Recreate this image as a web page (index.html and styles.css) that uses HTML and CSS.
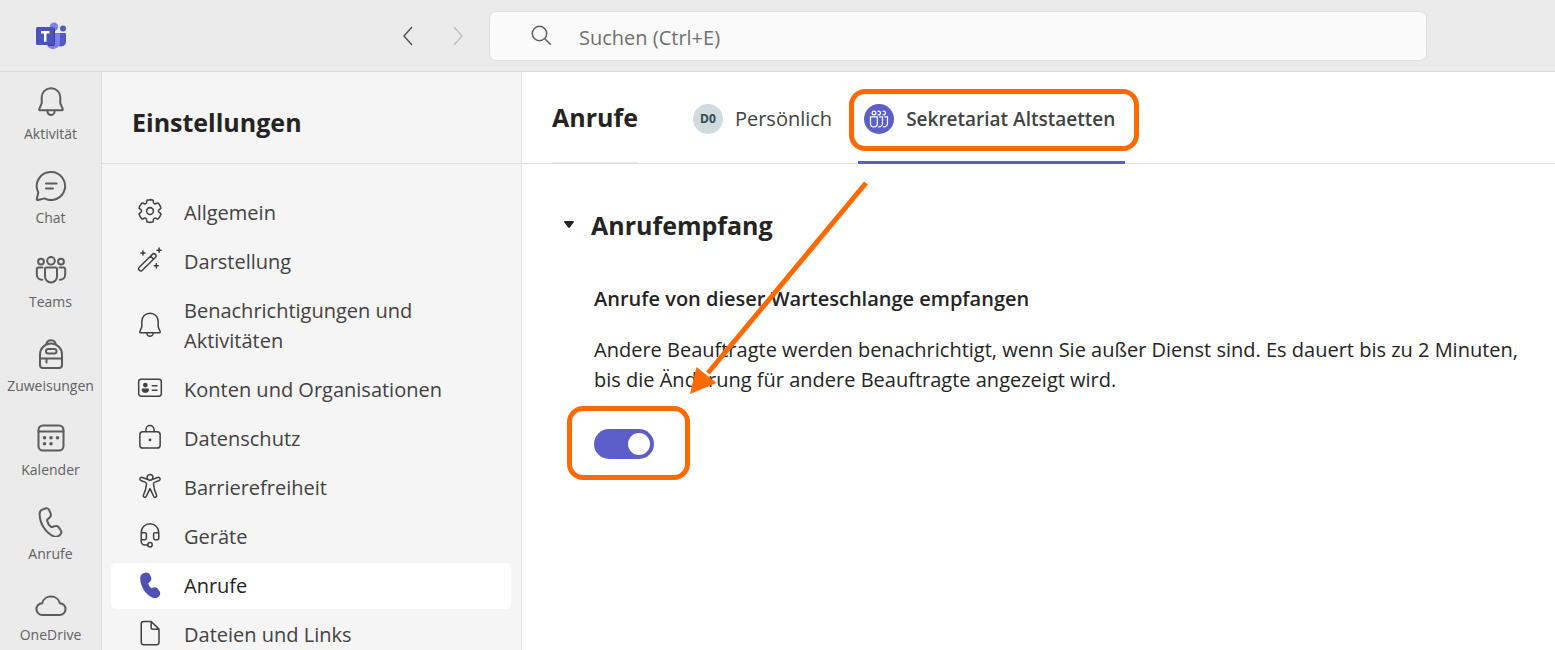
FILE: index.html
```html
<!DOCTYPE html>
<html lang="de">
<head>
  <meta charset="utf-8">
  <title>Einstellungen - Anrufe</title>
  <meta name="viewport" content="width=device-width, initial-scale=1">
  <link rel="stylesheet" href="styles.css">
</head>
<body>
  <header class="topbar">
    <div class="logo">
      <svg width="32" height="32" viewBox="0 0 32 32" aria-hidden="true">
        <circle cx="28" cy="8.500" r="3" fill="#5059c9"/>
        <path d="M22 13h8a1 1 0 0 1 1 1v7.500a5 5 0 0 1-9 3z" fill="#5059c9"/>
        <circle cx="19" cy="6.700" r="4.200" fill="#7b83eb"/>
        <path d="M13 13h11a1 1 0 0 1 1 1v8.500a7 7 0 0 1-13 3z" fill="#7b83eb"/>
        <path d="M13 8h6a1 1 0 0 1 1 1v15a2 2 0 0 1-2 2h-5z" fill="#3b3f86"/>
        <rect x="1" y="7" width="18" height="18" rx="1.500" fill="#4b53bc"/>
        <path d="M6 12.200h8.400M10.200 12.200v9.600" stroke="#fff" stroke-width="2.500" fill="none"/>
      </svg>
    </div>
    <div class="history">
      <button type="button" class="history-btn" aria-label="Zurück">
        <svg width="20" height="20" viewBox="0 0 20 20"><path d="M14 1L6 10l8 9"/></svg>
      </button>
      <button type="button" class="history-btn" aria-label="Vorwärts" disabled>
        <svg width="20" height="20" viewBox="0 0 20 20"><path d="M6 1l8 9-8 9"/></svg>
      </button>
    </div>
    <label class="search">
      <svg width="22" height="22" viewBox="0 0 22 22" aria-hidden="true"><circle cx="8.500" cy="8.500" r="7.200"/><path d="M13.800 13.800l6 6"/></svg>
      <input type="search" placeholder="Suchen (Ctrl+E)" aria-label="Suchen">
    </label>
  </header>

  <div class="app">
    <nav class="rail" aria-label="Apps">
      <a href="#" class="rail-item">
        <svg width="32" height="32" viewBox="0 0 32 32"><path d="M16 3.300c-5.200 0-9.300 3.900-9.300 8.900v6.200l-2.400 5.500c-.3.700.1 1.400.9 1.400h21.600c.8 0 1.200-.7.900-1.400l-2.400-5.500v-6.200c0-5-4.100-8.900-9.300-8.900z"/><path d="M12.300 25.800a3.700 4.200 0 0 0 7.400 0"/></svg>
        <span>Aktivität</span>
      </a>
      <a href="#" class="rail-item">
        <svg width="32" height="32" viewBox="0 0 32 32"><path d="M16 3a14 14 0 1 1-6.400 26.400L3 31c-.8.200-1.400-.5-1.200-1.200l1.500-6.400A14 14 0 0 1 16 3z"/><path d="M11 14.500h10.500M11 19.500h7"/></svg>
        <span>Chat</span>
      </a>
      <a href="#" class="rail-item">
        <svg width="32" height="32" viewBox="0 0 32 32"><circle cx="16" cy="7.800" r="3.800"/><circle cx="6" cy="8.600" r="2.900"/><circle cx="26" cy="8.600" r="2.900"/><path d="M11.500 14.600h9a1.500 1.500 0 0 1 1.500 1.500v7.400a6 6 0 0 1-12 0v-7.400a1.500 1.500 0 0 1 1.500-1.500z"/><path d="M7.500 14.600H3.300A1.500 1.500 0 0 0 1.800 16v5.500c0 3 2.200 5.200 5.400 5.200M24.500 14.600h4.200a1.500 1.500 0 0 1 1.500 1.500v5.400c0 3-2.200 5.200-5.400 5.200"/></svg>
        <span>Teams</span>
      </a>
      <a href="#" class="rail-item">
        <svg width="32" height="32" viewBox="0 0 32 32"><path d="M5 17.500a11 11 0 0 1 22 0V28a3 3 0 0 1-3 3H8a3 3 0 0 1-3-3z"/><path d="M5 21.500h22M11.500 21.500v4M11.300 7a4.800 4.800 0 0 1 9.400 0"/><rect x="11" y="12" width="10.500" height="4.400" rx="2.200"/></svg>
        <span>Zuweisungen</span>
      </a>
      <a href="#" class="rail-item">
        <svg width="32" height="32" viewBox="0 0 32 32"><rect x="3.500" y="4.500" width="25" height="25" rx="4.500"/><path d="M3.500 10.500h25"/><g class="dots"><circle cx="9.500" cy="16.800" r="1.800"/><circle cx="16" cy="16.800" r="1.800"/><circle cx="22.500" cy="16.800" r="1.800"/><circle cx="9.500" cy="22.800" r="1.800"/><circle cx="16" cy="22.800" r="1.800"/></g></svg>
        <span>Kalender</span>
      </a>
      <a href="#" class="rail-item">
        <svg width="32" height="32" viewBox="0 0 32 32"><path d="M7.200 4.600l3-1.100c1.600-.5 3.300.2 4 1.700l1.400 3.200c.6 1.400.2 3-.9 4l-2.100 1.900c-.4.400-.5.900-.4 1.400.5 2.400 1.900 4.600 3.700 6.100.4.300.9.400 1.400.2l2.700-.9c1.400-.4 3 .1 3.800 1.300l1.900 2.800c.9 1.300.8 3.100-.3 4.200l-.8.800c-1.400 1.400-3.500 2-5.400 1.400C10.300 27.900 5 18.500 4.600 9.600c-.1-2.200.9-4.300 2.600-5z"/></svg>
        <span>Anrufe</span>
      </a>
      <a href="#" class="rail-item">
        <svg width="32" height="29" viewBox="0 0 32 29"><path d="M7.500 26a5.900 5.900 0 0 1-.3-11.800C8 10.300 11.500 7.600 16 7.600s8 2.700 8.800 6.600a5.900 5.900 0 0 1-.3 11.800z"/></svg>
        <span>OneDrive</span>
      </a>
    </nav>

    <aside class="settings">
      <h1 class="settings-title">Einstellungen</h1>
      <nav class="settings-nav" aria-label="Einstellungen">
        <a href="#" class="settings-item">
          <svg width="28" height="28" viewBox="0 0 24 24"><path d="M12 2.250c.75 0 1.480.1 2.190.25.310.070.550.330.590.650l.17 1.530c.08.700.67 1.230 1.370 1.230.19 0 .38-.04.550-.12l1.400-.61c.29-.13.630-.06.850.17a9.800 9.800 0 0 1 2.200 3.800c.1.300 0 .630-.26.820l-1.250.92a1.380 1.380 0 0 0 0 2.220l1.250.92c.26.190.370.520.27.820a9.800 9.800 0 0 1-2.200 3.800c-.22.230-.56.300-.85.170l-1.410-.62a1.380 1.380 0 0 0-1.930 1.120l-.17 1.520c-.03.320-.26.580-.57.650a9.500 9.500 0 0 1-4.400 0 .75.750 0 0 1-.57-.65l-.17-1.520a1.380 1.380 0 0 0-1.930-1.110l-1.400.62c-.29.130-.63.060-.85-.17a9.800 9.800 0 0 1-2.200-3.800c-.1-.31.010-.64.270-.83l1.240-.91a1.380 1.380 0 0 0 0-2.230l-1.240-.91a.75.750 0 0 1-.27-.83 9.800 9.800 0 0 1 2.200-3.790c.22-.23.560-.3.850-.17l1.400.61a1.380 1.380 0 0 0 1.930-1.110l.17-1.530c.04-.32.270-.58.580-.65.720-.16 1.450-.24 2.190-.25z"/><circle cx="12" cy="12" r="2.900"/></svg>
          <span>Allgemein</span>
        </a>
        <a href="#" class="settings-item">
          <svg width="28" height="28" viewBox="0 0 24 24"><path d="M2.800 18.200L14 7.200a1.800 1.800 0 0 1 2.600 2.600l-11.200 11a1.800 1.800 0 0 1-2.600-2.600zM12.500 8.700l2.600 2.600M6 4.200v3.600M4.200 6h3.600M19.800 1.800v3.600M18 3.600h3.600M17.400 15.200v3.600M15.600 17h3.600"/></svg>
          <span>Darstellung</span>
        </a>
        <a href="#" class="settings-item">
          <svg width="28" height="28" viewBox="0 0 24 24"><path d="M12 2.700c-3.900 0-7 3-7 6.900v4.800l-1.700 4c-.2.500.1 1 .6 1h16.200c.5 0 .8-.5.6-1l-1.700-4V9.600c0-3.900-3.100-6.900-7-6.900zM9.200 19.600a2.800 3 0 0 0 5.600 0"/></svg>
          <span>Benachrichtigungen und Aktivitäten</span>
        </a>
        <a href="#" class="settings-item">
          <svg width="28" height="28" viewBox="0 0 24 24"><rect x="2.300" y="4.500" width="19.400" height="14.500" rx="2"/><path d="M14 10h4M14 14h4"/><g class="solid"><circle cx="8" cy="9.500" r="2"/><path d="M4.900 13.400c0-.6.400-.9.900-.9h4.400c.5 0 .9.300.9.900 0 1.700-1.300 2.700-3.100 2.700s-3.100-1-3.100-2.700z"/></g></svg>
          <span>Konten und Organisationen</span>
        </a>
        <a href="#" class="settings-item">
          <svg width="28" height="28" viewBox="0 0 24 24"><rect x="3.300" y="7.500" width="17.400" height="14" rx="2.500"/><path d="M8.500 7.300V5.700a3.500 3.500 0 0 1 7 0v1.600"/><circle class="solid" cx="12" cy="14.500" r="1.200"/></svg>
          <span>Datenschutz</span>
        </a>
        <a href="#" class="settings-item">
          <svg width="28" height="28" viewBox="0 0 24 24"><circle cx="12" cy="4.600" r="2.500"/><path d="M9.500 6.200L5.300 4.700c-1.900-.6-2.800 1.900-1.100 2.600l4 1.600c.6.300.9.800.8 1.400-.2 3.300-1 6.200-2.600 9.400-.8 1.700 1.500 2.800 2.400 1.200L12 14.200l3.200 6.700c.9 1.600 3.200.5 2.400-1.200-1.600-3.200-2.400-6.100-2.600-9.400-.1-.6.200-1.100.8-1.400l4-1.600c1.700-.7.800-3.200-1.100-2.600l-4.200 1.500"/></svg>
          <span>Barrierefreiheit</span>
        </a>
        <a href="#" class="settings-item">
          <svg width="28" height="28" viewBox="0 0 24 24"><path d="M4.500 15V9.800a7.500 7.500 0 0 1 15 0V15M4.500 10h3.200c.7 0 1.200.5 1.200 1.200v3.600c0 .7-.5 1.200-1.200 1.200H5.500a1 1 0 0 1-1-1zM19.500 10h-3.200c-.7 0-1.200.5-1.200 1.200v3.600c0 .7.5 1.200 1.200 1.200h2.200a1 1 0 0 0 1-1zM4.500 14.500v3a3 3 0 0 0 3 3H10"/><circle cx="12" cy="20.300" r="1.900"/></svg>
          <span>Geräte</span>
        </a>
        <a href="#" class="settings-item selected" aria-current="page">
          <svg width="28" height="28" viewBox="0 0 24 24"><path d="M6.300 2.800l1.500-.5c1.800-.5 3.600.3 4.300 2l.8 2c.5 1.400.2 2.900-.9 3.800l-1.500 1.300c.4 1.700 1.300 3.100 2.500 4.200l2-.6c1.400-.4 2.900.1 3.800 1.300l1.300 1.800c1 1.500.9 3.400-.4 4.600-1.400 1.400-3.400 1.800-5.200 1-6.200-2.500-10.400-8.900-10.900-15.800-.2-2.200.8-4.300 2.700-5.100z"/></svg>
          <span>Anrufe</span>
        </a>
        <a href="#" class="settings-item">
          <svg width="28" height="28" viewBox="0 0 24 24"><path d="M6.500 2.200H13l6.700 6.500V20a2 2 0 0 1-2 2h-11.200a2 2 0 0 1-2-2V4.200a2 2 0 0 1 2-2zM13 2.400v4.800a1.500 1.500 0 0 0 1.500 1.500h5"/></svg>
          <span>Dateien und Links</span>
        </a>
      </nav>
    </aside>

    <main class="content">
      <div class="content-head">
        <h2 class="content-title">Anrufe</h2>
        <div class="tabs" role="tablist">
          <button type="button" class="tab" role="tab" aria-selected="false">
            <span class="avatar">D0</span>
            <span>Persönlich</span>
          </button>
          <button type="button" class="tab active" role="tab" aria-selected="true">
            <span class="avatar avatar-queue">
              <svg width="20" height="20" viewBox="0 0 20 20" aria-hidden="true"><circle cx="5" cy="4" r="1.900"/><path d="M8.600 2.400a1.900 1.900 0 1 1 0 3.200M13.600 2.400a1.900 1.900 0 1 1 0 3.200M1.500 7.800h6.800v6.600a3.400 3.400 0 0 1-6.800 0zM10.200 7.800h3.300v6.600a3.400 3.400 0 0 1-4.300 3.300M15.300 7.800h3.200v6.600a3.400 3.400 0 0 1-4.300 3.300"/></svg>
            </span>
            <span>Sekretariat Altstaetten</span>
            <span class="marker marker-tab"></span>
          </button>
        </div>
      </div>

      <section class="section">
        <h3 class="section-title">
          <button type="button" class="section-toggle" aria-expanded="true">
            <svg width="10" height="8" viewBox="0 0 10 8" aria-hidden="true"><path d="M1 0h8c.9 0 1.200.9.600 1.600L5.800 6.500c-.4.500-1.200.5-1.600 0L.4 1.600C-.2.900.1 0 1 0z"/></svg>
            Anrufempfang
          </button>
        </h3>
        <div class="option">
          <label class="option-label" for="queue">Anrufe von dieser Warteschlange empfangen</label>
          <p class="option-text">Andere Beauftragte werden benachrichtigt, wenn Sie außer Dienst sind. Es dauert bis zu 2 Minuten, bis die Änderung für andere Beauftragte angezeigt wird.</p>
          <div class="option-control">
            <input type="checkbox" class="switch" role="switch" id="queue" checked>
            <span class="marker marker-switch"></span>
          </div>
        </div>
      </section>

      <svg class="arrow" width="180" height="214" viewBox="0 0 180 214" aria-hidden="true">
        <path d="M176 1L18 191" stroke="#ff6a00" stroke-width="5"/>
        <path d="M0 212l6.500-27 20 16z" fill="#ff6a00"/>
      </svg>
    </main>
  </div>
</body>
</html>
```
FILE: styles.css
```css
* {
  box-sizing: border-box;
}

body {
  margin: 0;
  height: 100vh;
  display: flex;
  flex-direction: column;
  overflow: hidden;
  font-family: "Open Sans", "Noto Sans", sans-serif;
  font-size: 20px;
  line-height: 30px;
  color: #242424;
  background: #fff;
}

h1, h2, h3, p {
  margin: 0;
}

a {
  color: inherit;
  text-decoration: none;
}

button {
  font: inherit;
  color: inherit;
  background: none;
  border: 0;
  padding: 0;
  cursor: pointer;
}

svg {
  display: block;
  flex: none;
  fill: none;
}

/* top bar */
.topbar {
  display: flex;
  align-items: center;
  flex: none;
  height: 72px;
  padding-right: 128px;
  background: #ebebeb;
  border-bottom: 1px solid #dcdcdc;
}

.logo {
  width: 102px;
  display: flex;
  justify-content: center;
}

.history {
  display: flex;
  gap: 30px;
  width: 387px;
  padding-left: 296px;
}

.history-btn svg {
  stroke: #555;
  stroke-width: 1.5;
}

.history-btn:disabled svg {
  stroke: #c0c0c0;
}

.search {
  flex: 1;
  display: flex;
  align-items: center;
  gap: 26px;
  height: 50px;
  padding: 0 20px 0 41px;
  background: #fafafa;
  border: 1px solid #e0e0e0;
  border-radius: 7px;
}

.search svg {
  stroke: #616161;
  stroke-width: 1.5;
}

.search input {
  flex: 1;
  min-width: 0;
  padding: 4px 0 0;
  font: inherit;
  background: none;
  border: 0;
  outline: 0;
}

.search input::placeholder {
  color: #707070;
}

.app {
  flex: 1;
  display: flex;
  min-height: 0;
}

/* app rail */
.rail {
  flex: none;
  width: 102px;
  background: #ebebeb;
  border-right: 1px solid #dfdfdf;
  overflow: hidden;
}

.rail-item {
  display: flex;
  flex-direction: column;
  align-items: center;
  gap: 7px;
  padding: 13px 0 12px;
  font-size: 14px;
  line-height: 20px;
  color: #616161;
}

.rail-item svg {
  stroke: #5c5c5c;
  stroke-width: 2;
  stroke-linecap: round;
  stroke-linejoin: round;
}

.dots {
  fill: #5c5c5c;
  stroke: none;
}

/* settings panel */
.settings {
  flex: none;
  width: 420px;
  background: #f5f5f5;
  border-right: 1px solid #e6e6e6;
  overflow: hidden;
}

.settings-title {
  height: 92px;
  padding: 35px 30px 0;
  font-size: 25px;
  line-height: 30px;
  border-bottom: 1px solid #dfdfdf;
}

.settings-nav {
  display: flex;
  flex-direction: column;
  gap: 3px;
  padding: 26px 10px 0 9px;
}

.settings-item {
  display: flex;
  align-items: center;
  gap: 20px;
  padding: 8px 25px;
  color: #424242;
  border-radius: 5px;
}

.settings-item svg {
  margin: -2px 0 2px;
  stroke: #424242;
  stroke-width: 1.3;
  stroke-linecap: round;
  stroke-linejoin: round;
}

.settings-item .solid {
  fill: #424242;
  stroke: none;
}

.settings-item.selected {
  background: #fff;
  color: #242424;
}

.settings-item.selected svg {
  fill: #4f52b2;
  stroke: none;
}

/* content */
.content {
  position: relative;
  flex: 1;
  min-width: 0;
}

.content-head {
  display: flex;
  height: 92px;
  padding-left: 30px;
  border-bottom: 1px solid #dfdfdf;
}

.content-title {
  padding-top: 30px;
  font-size: 25px;
  line-height: 30px;
  border-bottom: 1px solid #ebebeb;
}

.tabs {
  display: flex;
  gap: 16px;
  margin-left: 49px;
}

.tab {
  position: relative;
  display: flex;
  align-items: center;
  gap: 12px;
  height: 92px;
  padding: 5px 10px 0 6px;
  color: #424242;
  white-space: nowrap;
  border-bottom: 3px solid transparent;
}

.tab.active {
  font-size: 19px;
  font-weight: 600;
  border-bottom-color: #5b5fc7;
}

.avatar {
  display: flex;
  align-items: center;
  justify-content: center;
  width: 30px;
  height: 30px;
  font-size: 12px;
  line-height: 16px;
  font-weight: 700;
  color: #30484e;
  background: #d0dadf;
  border-radius: 50%;
}

.avatar-queue {
  background: #5b5fc7;
}

.avatar-queue svg {
  stroke: #fff;
  stroke-width: 1.2;
}

.section {
  padding: 46px 30px 0 42px;
}

.section-title {
  font-size: 25px;
  line-height: 30px;
}

.section-toggle {
  display: flex;
  align-items: center;
  gap: 17px;
}

.section-toggle svg {
  fill: #242424;
}

.option {
  padding: 44px 0 0 30px;
}

.option-label {
  display: block;
  font-weight: 600;
}

.option-text {
  margin-top: 21px;
}

.option-control {
  position: relative;
  width: 60px;
  height: 30px;
  margin-top: 34px;
}

.switch {
  appearance: none;
  display: block;
  width: 60px;
  height: 30px;
  margin: 0;
  padding: 4px;
  background: #5b5fc7;
  border-radius: 15px;
  cursor: pointer;
}

.switch::before {
  content: "";
  display: block;
  width: 22px;
  height: 22px;
  background: #fff;
  border-radius: 50%;
}

.switch:checked::before {
  margin-left: auto;
}

/* orange markers lie over the page */
.marker {
  position: absolute;
  border: 5px solid #ff6a00;
  border-radius: 16px;
  pointer-events: none;
}

.marker-tab {
  top: 17px;
  right: -14px;
  left: -9px;
  height: 62px;
}

.marker-switch {
  top: -23px;
  right: -36px;
  bottom: -21px;
  left: -27px;
}

.arrow {
  position: absolute;
  top: 110px;
  left: 168px;
  pointer-events: none;
}
```
